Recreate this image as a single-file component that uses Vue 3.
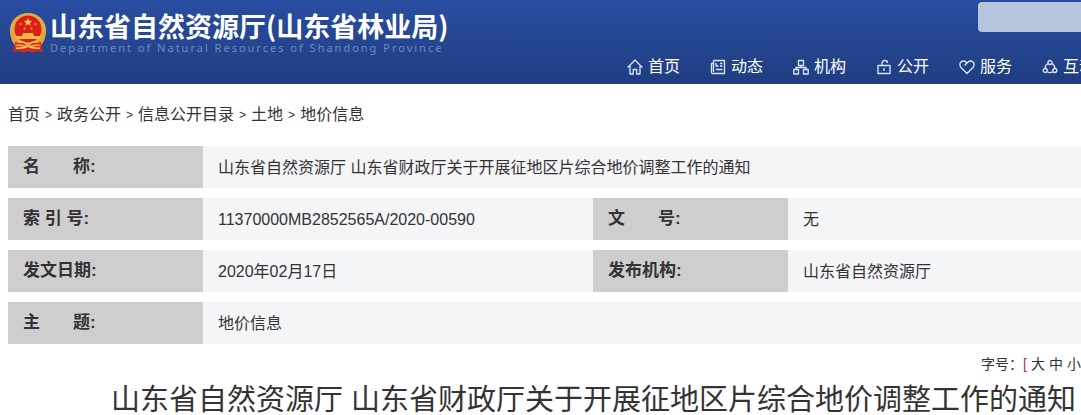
<template>
  <div class="page">
    <header class="header">
      <div class="brand">
        <svg class="emblem" viewBox="0 0 38 42" aria-hidden="true">
          <path d="M6 29 L4 40 L10 39 L14 41 L19 39 L24 41 L28 39 L34 40 L32 29 Z" fill="#d8261c" />
          <ellipse cx="19" cy="18" rx="18" ry="17" fill="#e0ac45" />
          <path d="M1 18 Q1 29 7 34 L19 35 L31 34 Q37 29 37 18 Z" fill="#e3a83c" />
          <circle cx="19" cy="17" r="13.5" fill="#dc1f16" />
          <path d="M19 6 l1.2 2.8 3 .2 -2.3 1.9 .8 2.9 -2.7 -1.6 -2.7 1.6 .8 -2.9 -2.3 -1.9 3 -.2 Z" fill="#f3c64c" />
          <g fill="#f0b845">
            <circle cx="11.5" cy="12" r="1" />
            <circle cx="26.5" cy="12" r="1" />
            <circle cx="15.5" cy="16.5" r="1" />
            <circle cx="22.5" cy="16.5" r="1" />
            <path d="M14 21 H24 L25 24 H31 V27 H7 V24 H13 Z" />
          </g>
          <path d="M6 30 Q12 28 19 31 Q26 28 32 30 L32 33 Q25 31 19 35 Q13 31 6 33 Z" fill="#e32a1f" />
          <path d="M8 30 Q15 29 19 33 Q23 29 30 30 M7 36 Q14 37 19 34 Q24 37 31 36" fill="none" stroke="#f1cf6d" stroke-width="1.5" />
          <circle cx="19" cy="33" r="2.5" fill="#e6b04a" />
        </svg>
        <div class="brand-text">
          <div class="brand-name">山东省自然资源厅(山东省林业局)</div>
          <div class="brand-sub">Department of Natural Resources of Shandong Province</div>
        </div>
      </div>
      <input class="search" type="text" aria-label="搜索" />
      <nav class="nav">
        <a v-for="item in navItems" :key="item.label" class="nav-item" href="#">
          <svg class="nav-icon" viewBox="0 0 16 16" aria-hidden="true">
            <path v-for="d in item.paths" :key="d" :d="d" />
          </svg>
          <span>{{ item.label }}</span>
        </a>
      </nav>
    </header>

    <main class="content">
      <nav class="crumbs">
        <template v-for="(crumb, i) in crumbs" :key="crumb">
          <span v-if="i" class="crumb-sep">&gt;</span>
          <a href="#">{{ crumb }}</a>
        </template>
      </nav>

      <dl class="info">
        <div
          v-for="field in fields"
          :key="field.label"
          class="field"
          :class="{ wide: field.wide }"
        >
          <dt>{{ field.label }}</dt>
          <dd>{{ field.value }}</dd>
        </div>
      </dl>

      <div class="font-size">
        <span>字号：</span>
        <span class="bracket">[</span>
        <button type="button">大</button>
        <button type="button">中</button>
        <button type="button">小</button>
      </div>

      <h1 class="title">山东省自然资源厅 山东省财政厅关于开展征地区片综合地价调整工作的通知</h1>
    </main>
  </div>
</template>

<script setup>
const navItems = [
  {
    label: '首页',
    paths: ['M.7 8.5 L8 1 L15.3 8.5 M3 7 V15 H6.3 V10.5 H9.7 V15 H13 V7'],
  },
  {
    label: '动态',
    paths: ['M3.5 1.5 H14.5 V14.5 H2.5 Q1.5 14.5 1.5 13 V4.5 H3.5 M3.5 1.5 V13', 'M6 4 V7 H8.5 M10 4.5 H12.5 M10 7 H12.5 M6 10.5 H12.5'],
  },
  {
    label: '机构',
    paths: ['M5.5 1.5 H10.5 V6.5 H5.5 Z M.8 10.5 H5.5 V15 H.8 Z M10.5 10.5 H15.2 V15 H10.5 Z', 'M8 6.5 V8.5 M3 10.5 V8.5 H13 V10.5'],
  },
  {
    label: '公开',
    paths: ['M2 6.5 H14 V14.5 H2 Z M8 9 V12', 'M6 6.5 V4 Q6 1.5 8.8 1.5 Q11.5 1.5 11.5 4'],
  },
  {
    label: '服务',
    paths: ['M8 14.5 L2 8.5 Q-.2 5.5 2 3 Q5 .6 8 4 Q11 .6 14 3 Q16.2 5.5 14 8.5 Z', 'M8 4 L5.5 6.5'],
  },
  {
    label: '互动',
    paths: [
      'M6 3.5 a2 2 0 1 0 4 0 a2 2 0 1 0 -4 0 M1.2 11.5 a2 2 0 1 0 4 0 a2 2 0 1 0 -4 0 M10.8 11.5 a2 2 0 1 0 4 0 a2 2 0 1 0 -4 0',
      'M6 4.5 Q3.2 6 3 9.5 M10 4.5 Q12.8 6 13 9.5 M5 12.8 Q8 14.6 11 12.8',
    ],
  },
]

const crumbs = ['首页', '政务公开', '信息公开目录', '土地', '地价信息']

// non-breaking spaces stretch short labels to the four-character width
const wideGap = '\u00a0'.repeat(7)

const fields = [
  { label: `名${wideGap}称:`, value: '山东省自然资源厅 山东省财政厅关于开展征地区片综合地价调整工作的通知', wide: true },
  { label: '索 引 号:', value: '11370000MB2852565A/2020-00590' },
  { label: `文${wideGap}号:`, value: '无' },
  { label: '发文日期:', value: '2020年02月17日' },
  { label: '发布机构:', value: '山东省自然资源厅' },
  { label: `主${wideGap}题:`, value: '地价信息', wide: true },
]
</script>

<style>
body {
  background: #fff;
}
</style>

<style scoped>
.page {
  overflow: hidden;
  font-family: "Liberation Sans", "Noto Sans CJK SC", sans-serif;
  font-size: 16px;
  color: #333;
}

a {
  color: inherit;
  text-decoration: none;
}

.header {
  display: grid;
  grid-template-columns: 1fr 103px;
  grid-template-rows: 50px 34px;
  overflow: hidden;
  background: linear-gradient(#294da1, #203d80);
}

.brand {
  display: flex;
  gap: 3px;
  padding: 12px 0 0 9px;
}

.emblem {
  width: 38px;
  height: 42px;
}

.brand-text {
  color: #fff;
  white-space: nowrap;
}

.brand-name {
  font-family: "Noto Sans CJK SC", sans-serif;
  font-size: 27px;
  font-weight: 700;
  line-height: 28px;
}

.brand-sub {
  font-family: "Noto Sans", sans-serif;
  font-size: 11px;
  line-height: 16px;
  letter-spacing: 2px;
  color: #6f8ac4;
}

.search {
  box-sizing: border-box;
  width: 100%;
  height: 30px;
  margin: 2px 0 0;
  padding: 0 10px;
  border: 0;
  border-radius: 4px 0 0 4px;
  background: #b5c5dd;
}

.nav {
  grid-column: 1 / -1;
  display: flex;
  justify-content: flex-end;
  align-items: center;
  gap: 30px;
  margin-right: -14px;
  color: #fff;
}

.nav-item {
  display: flex;
  align-items: center;
  gap: 5px;
  line-height: 24px;
  white-space: nowrap;
}

.nav-icon {
  width: 16px;
  height: 16px;
  fill: none;
  stroke: #dce8ff;
  stroke-width: 1.3;
  stroke-linejoin: round;
}

.content {
  padding-left: 8px;
}

.crumbs {
  display: flex;
  align-items: center;
  padding: 19px 0;
  line-height: 24px;
}

.crumb-sep {
  margin: 0 5px;
  font-size: 12px;
}

.info {
  display: grid;
  grid-template-columns: 585px 1fr;
  gap: 10px 0;
  margin: 0;
}

.field {
  display: flex;
  background: #f4f5f7;
}

.field.wide {
  grid-column: 1 / -1;
}

.field dt {
  box-sizing: border-box;
  width: 195px;
  padding: 9px 15px;
  background: #cecece;
  font-size: 17px;
  font-weight: 700;
  line-height: 24px;
}

.field dd {
  flex: 1;
  margin: 0;
  padding: 10px 15px 8px;
  line-height: 24px;
  white-space: nowrap;
}

.font-size {
  display: flex;
  justify-content: flex-end;
  gap: 4px;
  margin-top: 10px;
  font-size: 14px;
  line-height: 20px;
  white-space: nowrap;
}

.font-size button {
  padding: 0;
  border: 0;
  background: none;
  color: inherit;
  font: inherit;
}

.bracket {
  margin-left: -4px;
  color: #a33;
}

.title {
  margin: 8px 0 0;
  padding-right: 5px;
  font-size: 29px;
  font-weight: 400;
  line-height: 36px;
  text-align: right;
  white-space: nowrap;
}
</style>
